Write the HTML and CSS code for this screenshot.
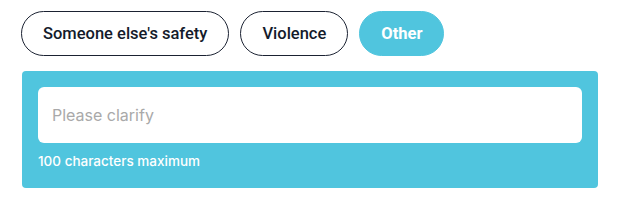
FILE: index.html
```html
<!DOCTYPE html>
<html>
<head>
<meta charset="utf-8">
<link rel="stylesheet" href="styles.css">
</head>
<body>
<div class="wrap">
  <div class="pills">
    <button class="pill">Someone else's safety</button>
    <button class="pill">Violence</button>
    <button class="pill pill-active">Other</button>
  </div>
  <div class="panel">
    <input class="field" type="text" placeholder="Please clarify">
    <div class="hint">100 characters maximum</div>
  </div>
</div>
</body>
</html>
```
FILE: styles.css
```css
html, body {
  margin: 0;
  padding: 0;
  background: #ffffff;
}
body {
  font-family: Inter, "Liberation Sans", sans-serif;
}
.wrap {
  padding: 11px 0 0 21px;
}
.pills {
  display: flex;
  gap: 11px;
}
.pill {
  box-sizing: border-box;
  height: 45px;
  padding: 0 21px;
  border: 1px solid #1b2232;
  border-radius: 23px;
  background: #ffffff;
  color: #141b2b;
  font-family: Roboto, "Liberation Sans", sans-serif;
  font-size: 16.5px;
  font-weight: 500;
  cursor: pointer;
}
.pill-active {
  background: #50c5de;
  border-color: #50c5de;
  color: #ffffff;
  font-weight: 700;
}
.panel {
  box-sizing: border-box;
  width: 576px;
  margin: 15px 0 0 1px;
  padding: 16px 16px 18px 16px;
  background: #50c5de;
  border-radius: 4px;
}
.field {
  display: block;
  box-sizing: border-box;
  width: 544px;
  height: 56px;
  padding: 0 14px;
  border: none;
  border-radius: 6px;
  background: #ffffff;
  font-family: Inter, "Liberation Sans", sans-serif;
  font-size: 16px;
  color: #222;
  outline: none;
}
.field::placeholder {
  color: #a9a9a9;
}
.hint {
  margin-top: 9px;
  font-size: 13.5px;
  line-height: 18px;
  font-weight: 500;
  color: #ffffff;
}
```
